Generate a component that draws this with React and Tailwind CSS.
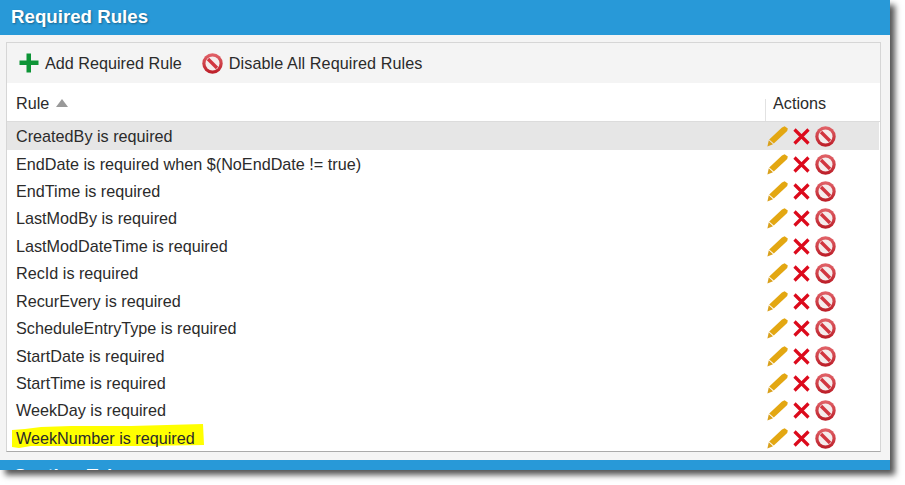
const RULES = [
  'CreatedBy is required',
  'EndDate is required when $(NoEndDate != true)',
  'EndTime is required',
  'LastModBy is required',
  'LastModDateTime is required',
  'RecId is required',
  'RecurEvery is required',
  'ScheduleEntryType is required',
  'StartDate is required',
  'StartTime is required',
  'WeekDay is required',
  'WeekNumber is required',
];

function PlusIcon() {
  return (
    <svg width="20" height="20" viewBox="0 0 20 20" className="shrink-0">
      <path d="M7.5 0.5h4.5v7h7.5v4.5H12v7.5H7.5V12H0.5V7.5h7z" fill="#0d9436" />
    </svg>
  );
}

function BanIcon() {
  return (
    <svg width="21" height="21" viewBox="0 0 21 21" className="shrink-0">
      <defs>
        <linearGradient id="ban" x1="0" y1="0" x2="0" y2="1">
          <stop offset="0" stopColor="#e2646a" />
          <stop offset="1" stopColor="#bb1c26" />
        </linearGradient>
      </defs>
      <circle cx="10.5" cy="10.5" r="10.2" fill="url(#ban)" />
      <circle cx="10.5" cy="10.5" r="7" fill="#f5ecec" />
      <path d="M4.8 7.2L7.2 4.8L16.2 13.8L13.8 16.2z" fill="#d23640" />
    </svg>
  );
}

function PencilIcon() {
  return (
    <svg width="21" height="21" viewBox="0 0 21 21" className="shrink-0">
      <path d="M15 1.6L17.6 0.2L20.8 2.4L20.2 5L6.8 17.4L2.2 13.4z" fill="#e3a712" />
      <path d="M1.8 14.2L6 18.2L0.4 20.6z" fill="#d9a01a" />
    </svg>
  );
}

function CrossIcon() {
  return (
    <svg width="17" height="17" viewBox="0 0 17 17" className="shrink-0">
      <path d="M1.5 1.5L15.5 15.5M15.5 1.5L1.5 15.5" stroke="#dc0a1c" strokeWidth="3.2" />
    </svg>
  );
}

function RuleRow({ text, selected, highlighted }) {
  return (
    <div className={`relative flex h-[27.45px] shrink-0 items-center ${selected ? 'bg-[#e6e6e6] mr-[1px]' : ''}`}>
      {highlighted && (
        <svg width="194" height="26" viewBox="0 0 194 26" className="absolute left-[4px] top-[-1px]">
          <path d="M1 7L14 6L30 4L60 3L120 3L192 1L193 22L130 23L20 23L8 25L1 24z" fill="#ffff00" />
        </svg>
      )}
      <span className="relative w-[760px] pl-[9px] text-[16.2px] leading-[20px] text-[#2b2b2b]">{text}</span>
      <div className="flex items-center pt-[1px]">
        <PencilIcon />
        <span className="ml-[5px]"><CrossIcon /></span>
        <span className="ml-[5px]"><BanIcon /></span>
      </div>
    </div>
  );
}

export default function App() {
  return (
    <div className="h-[485px] w-[905px] overflow-hidden bg-white font-['Liberation_Sans',Arial,sans-serif]">
      <div className="flex h-[470px] w-[890px] flex-col shadow-[5px_5px_6px_#555555]">
        <div className="flex h-[35px] shrink-0 items-center bg-[#2899d8] pl-[11px]">
          <h1 className="text-[18.7px] font-bold text-white [text-shadow:1px_1px_2px_rgba(0,0,0,0.35)]">Required Rules</h1>
        </div>

        <div className="flex flex-1 flex-col bg-[#f4f4f4] px-[6px] pb-[8px] pt-[7px]">
          <div className="flex flex-1 flex-col border border-[#d6d6d6] border-b-[#aaaaaa] mr-[3px]">
            <div className="flex h-[40px] shrink-0 items-center pl-[12px] text-[16.2px] text-[#2b2b2b]">
              <PlusIcon />
              <span className="ml-[6px]">Add Required Rule</span>
              <span className="ml-[20px]"><BanIcon /></span>
              <span className="ml-[6px] tracking-[0.08px]">Disable All Required Rules</span>
            </div>

            <div className="flex flex-1 flex-col bg-white">
              <div className="flex h-[39px] shrink-0 items-center border-b border-[#dcdcdc] pt-[3px] text-[16.2px] text-[#2b2b2b]">
                <div className="flex w-[758px] items-center pl-[9px]">
                  Rule
                  <span className="ml-[7px] h-0 w-0 border-x-[6px] border-b-[8px] border-x-transparent border-b-[#999999]" />
                </div>
                <div className="mt-[13px] h-[22px] w-px bg-[#e2e2e2]" />
                <span className="ml-[7px]">Actions</span>
              </div>

              <div className="flex h-[329px] flex-col pt-[0.4px]">
                {RULES.map((rule, index) => (
                  <RuleRow
                    key={rule}
                    text={rule}
                    selected={index === 0}
                    highlighted={rule.startsWith('WeekNumber')}
                  />
                ))}
              </div>
            </div>
          </div>
        </div>

        <div className="h-[10px] shrink-0 overflow-hidden bg-[#2899d8] pl-[14px] pt-[6px]">
          <div className="text-[18.7px] font-bold leading-[20px] text-white">Section Tabs</div>
        </div>
      </div>
    </div>
  );
}
